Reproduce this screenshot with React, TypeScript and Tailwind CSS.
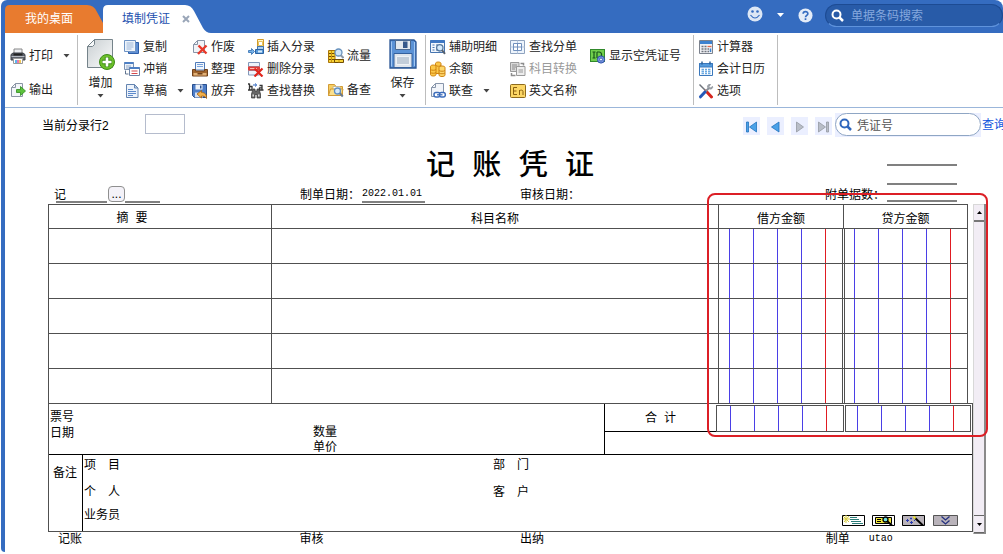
import React from "react";

type Kids = { children: React.ReactNode };

function Ic({ children }: Kids) {
  return (
    <svg className="size-4 shrink-0" viewBox="0 0 16 16" fill="none" aria-hidden="true">
      {children}
    </svg>
  );
}

function Caret() {
  return (
    <svg className="h-[4px] w-[7px] shrink-0" viewBox="0 0 7 4" aria-hidden="true">
      <path d="M.5 0h6L3.500 3.500z" fill="#444" />
    </svg>
  );
}

const PrintIcon = (
  <Ic>
    <path d="M4 1h8v6H4z" fill="#eceef2" stroke="#888" />
    <path d="M1 6.500 3 5h10l2 1.500V12H1z" fill="#5d626c" stroke="#3c4049" />
    <path d="M3.500 5.500h9v2h-9z" fill="#222" />
    <path d="M1.500 8.500h13" stroke="#b4b9c2" />
    <path d="M3.500 10.500h9v5h-9z" fill="#fff" stroke="#999" />
    <path d="M5 12h2v3H5z" fill="#59b7ee" />
    <path d="M7 12h2v3H7z" fill="#e77ab0" />
    <path d="M9 12h2v3H9z" fill="#f1c857" />
  </Ic>
);

const ExportIcon = (
  <Ic>
    <path d="M5.500 1.500h7v13h-11v-9z" fill="#f3f6f9" stroke="#8a95a5" />
    <path d="M1.500 5.500h4v-4" stroke="#8a95a5" />
    <path d="M6.500 7.500h4V4.500L15.500 9l-5 4.500v-3h-4z" fill="#5dc23c" stroke="#2c8a1c" strokeWidth=".8" />
  </Ic>
);

const CopyIcon = (
  <Ic>
    <path d="M4.500 3.500h10v11h-10z" fill="#5f8fd4" stroke="#2d5ea8" />
    <path d="M.5 1.500h11v11H.5z" fill="#eef4fb" stroke="#6e93c4" />
    <path d="M2.500 4h7M2.500 6h7M2.500 8h7M2.500 10h5" stroke="#9db6d8" />
  </Ic>
);

const OffsetIcon = (
  <Ic>
    <path d="M.5 1.500h9v7h-9z" fill="#eef3fa" stroke="#7c93b3" />
    <path d="M.5 2h9" stroke="#4d7fc4" strokeWidth="2" />
    <path d="M2 5h5M2 7h3" stroke="#8fa6c5" />
    <path d="M5.500 6.500h10v8h-10z" fill="#fff" stroke="#6d83a5" />
    <path d="M5.500 7h10" stroke="#4d7fc4" strokeWidth="2" />
    <path d="M7.500 10h6M7.500 12.500h6" stroke="#d5484c" />
    <path d="M1.500 9.500v3.500h3" stroke="#5f738f" />
  </Ic>
);

const DraftIcon = (
  <Ic>
    <path d="M2.500 1.500h8l3.500 3.500v9.500H2.500z" fill="#edf3fb" stroke="#6484b0" />
    <path d="M10.500 1.500V5H14z" fill="#bcd0ea" stroke="#6484b0" />
    <path d="M4 6.500h5M4 8.500h8M4 10.500h8M4 12.500h5" stroke="#5d8acb" />
  </Ic>
);

const VoidIcon = (
  <Ic>
    <path d="M5.500 1.500h7v12h-11v-8z" fill="#f2f4f8" stroke="#8995a8" />
    <path d="M1.500 5.500h4v-4" stroke="#8995a8" />
    <path d="m6.500 6.500 8 8M14.500 6.500l-8.500 8.500" stroke="#e8392a" strokeWidth="2.400" />
  </Ic>
);

const ArrangeIcon = (
  <Ic>
    <path d="M3.500 1.500h9V9h-9z" fill="#f3f7fc" stroke="#4f7ab8" />
    <path d="M5 3.500h6M5 5.500h6" stroke="#77a2dc" />
    <path d="M.5 8.500h3V10h9V8.500h3V15H.5z" fill="#a2662e" stroke="#70411b" />
    <path d="M1.500 12h13v2.500h-13z" fill="#e0b077" />
    <path d="M5.500 12h5v1.500h-5z" fill="#70411b" />
  </Ic>
);

const DiscardIcon = (
  <Ic>
    <path d="M.5 1.500h14v13h-12l-2-2z" fill="#4d7dc7" stroke="#294f8d" />
    <path d="M3.500 1.500h7v5h-7z" fill="#eef3fa" />
    <path d="M8 2.500h1.500v3H8z" fill="#294f8d" />
    <path d="M3 9.500h8v5H3z" fill="#d5dfee" />
    <path d="m5 11 4.500-3.500v2c3.500 0 5.500 2 5 6-1-2-2.500-2.500-5-2.500v2z" fill="#f2b04a" stroke="#9f5d12" strokeWidth=".8" />
  </Ic>
);

const InsertIcon = (
  <Ic>
    <path d="M9.500.5h6v8h-6z" fill="#fff6c9" stroke="#d29a27" />
    <path d="M10.500 2.500h4v4h-4z" fill="#fff" stroke="#e8c25c" />
    <path d="M9.500 7.500h6v3h-6z" fill="#a9cdf0" stroke="#3f73ad" />
    <path d="M7.500 10.500h8v4h-8z" fill="#5597d8" stroke="#2b62a2" />
    <path d="M10 11.500h4v2h-4z" fill="#d7ebfb" />
    <path d="M3.500 9.500 6.500 12.500l-3 3v-2H.5v-2h3z" fill="#77b2e8" stroke="#2e6cb0" strokeWidth=".8" />
  </Ic>
);

const DeleteIcon = (
  <Ic>
    <path d="M.5 1.500h11v4H.5z" fill="#eef3fb" stroke="#8298ba" />
    <path d="M.5 9.500h11v4.500H.5z" fill="#eef3fb" stroke="#8298ba" />
    <path d="M0 5.500h12v4H0z" fill="#e2403b" />
    <path d="M2 7.500h7" stroke="#ffb9b4" />
    <path d="m6.500 7.500 8 8M14.500 7.500l-8 8" stroke="#e0251c" strokeWidth="2.200" />
  </Ic>
);

const ReplaceIcon = (
  <Ic>
    <path d="M1.500.5v7M1.500 3.500h2.500V7H1.500M0 1h1.500M0 7h2" stroke="#333" strokeWidth="1.300" />
    <path d="M11.500 2.500h2.500V7h-2.500V4.800H14M14 7h1.500" stroke="#333" strokeWidth="1.300" />
    <path d="M5 2h3M7 .5 8.800 2 7 3.500" stroke="#2b63bd" />
    <path d="M5 6h2v2h2V6h2l1.500 5v4H9v-3.500H7V15H3.500v-4z" fill="#666" stroke="#333" strokeWidth=".7" />
    <path d="M4.500 11.500h1.500v2H4.500zM10 11.500h1.500v2H10z" fill="#ddd" />
  </Ic>
);

const FlowIcon = (
  <Ic>
    <path d="M.5 2.500H7v12H.5z" fill="#f8d338" stroke="#a87408" />
    <path d="M6.500 11.500h9v3h-9z" fill="#f8d338" stroke="#6f4c06" />
    <path d="M1 5.500h5.500M1 8.500h5.500M1 11.500h14.500" stroke="#6f4c06" />
    <path d="M3.500 3v11M11 12v2.500" stroke="#c9940f" />
    <circle cx="10.500" cy="4.500" r="3.500" fill="#cfe6fa" stroke="#6791bd" strokeWidth="1.300" />
    <path d="m12.800 7.200 2.700 2.800" stroke="#8c98a8" strokeWidth="2" />
  </Ic>
);

const LookupIcon = (
  <Ic>
    <path d="M.5 2.500h6l1.500 2h6.500v9H.5z" fill="#f7cf63" stroke="#d19a35" />
    <path d="M5 4.500h7v5H5z" fill="#fff" stroke="#c9b892" />
    <path d="m.5 13.500 2-6.500h12.500l-1.500 6.500z" fill="#fbe08d" stroke="#d19a35" />
    <circle cx="9.500" cy="9" r="3" fill="#d5eafb" stroke="#5f8fc4" strokeWidth="1.300" />
    <path d="m11.800 11.300 3 3.200" stroke="#6b7b90" strokeWidth="2" />
  </Ic>
);

const DetailIcon = (
  <Ic>
    <path d="M.5 1.500h14v12H.5z" fill="#f1f6fc" stroke="#4674b0" />
    <path d="M.5 2.500h14" stroke="#3e77c3" strokeWidth="3" />
    <path d="M2.500 6h2M2.500 8.500h2M2.500 11h2M6 6h2M6 11h1" stroke="#4674b0" strokeWidth="1.200" />
    <circle cx="9.800" cy="8.800" r="3.200" fill="#d5eafb" stroke="#56789e" strokeWidth="1.300" />
    <path d="m12 11.200 3 3.600" stroke="#56606e" strokeWidth="2" />
  </Ic>
);

const BalanceIcon = (
  <Ic>
    <path d="M5.500 2.500C5.500.5 11 .5 11 2.500v10H5.500z" fill="#fbc84a" stroke="#cf8413" />
    <path d="M.5 5.500c0-2 5.500-2 5.500 0v8c0 2-5.500 2-5.500 0z" fill="#fbc84a" stroke="#cf8413" />
    <path d="M9 6.500c0-2 6-2 6 0v7.500c0 2-6 2-6 0z" fill="#fcd76c" stroke="#cf8413" />
    <path d="M.5 8.500c1 1 4.500 1 5.500 0M.5 11.500c1 1 4.500 1 5.500 0M9 9.500c1 1 5 1 6 0M9 12c1 1 5 1 6 0M6 4.500c1 1 4 1 5 0" stroke="#cf8413" />
  </Ic>
);

const LinkIcon = (
  <Ic>
    <path d="M5.500.5h8v13H1.500V4.500z" fill="#f2f5fa" stroke="#8795aa" />
    <path d="M1.500 4.500h4v-4" stroke="#8795aa" />
    <rect x="4" y="9.500" width="6" height="4.500" rx="2" fill="#fff" stroke="#3c6cba" strokeWidth="1.500" />
    <rect x="9.500" y="9.500" width="5.800" height="4.500" rx="2" fill="#fff" stroke="#3c6cba" strokeWidth="1.500" />
    <path d="M7 11.800h5.500" stroke="#3c6cba" strokeWidth="1.300" />
  </Ic>
);

const SplitIcon = (
  <Ic>
    <path d="M.5 1.500h14v13H.5z" fill="#edf4fc" stroke="#8fa3bf" />
    <path d="M.5 8h14M7.500 1.500v13" stroke="#b5c7df" />
    <path d="M3.500 4.500h8v7h-8z" fill="#fff" stroke="#7190bd" />
    <path d="M3.500 8h8M7.500 4.500v7" stroke="#7190bd" />
  </Ic>
);

const ConvertIcon = (
  <Ic>
    <path d="M.5 1.500h8.500v9H.5z" fill="#d9d9d9" stroke="#9a9a9a" />
    <path d="M2 4h5M2 6h5M2 8h3" stroke="#8d8d8d" />
    <path d="M6.500 5.500h8.500v9H6.500z" fill="#ededed" stroke="#9a9a9a" />
    <path d="M8.500 9h4.500M8.500 11h4.500" stroke="#999" />
    <path d="M10.500 2.500h3v2M1.500 12v2.500h4" stroke="#8d8d8d" strokeWidth="1.500" />
  </Ic>
);

const EnglishIcon = (
  <Ic>
    <rect x=".5" y="1.500" width="15" height="13" rx="1" fill="#fcd665" stroke="#8d6a1d" />
    <path d="M7 4.500H3.500v7H7M3.500 8h3M9.500 12V7M9.500 8c1-1.300 3.500-1.200 3.500.5V12" stroke="#8a6110" />
  </Ic>
);

const IdIcon = (
  <Ic>
    <rect x=".5" y="1.500" width="14" height="12" fill="#72cf4d" stroke="#31892b" />
    <path d="M2.500 4h3M4 4v6M2.500 10h3M7 4v6M7 4h2c3.500 0 3.500 6 0 6H7" stroke="#17551a" strokeWidth="1.200" />
    <circle cx="11" cy="11.500" r="3.600" fill="#7797e3" stroke="#2d4fa8" />
    <circle cx="11" cy="11.500" r="1.500" fill="#e6eefd" stroke="#2d4fa8" strokeWidth=".8" />
  </Ic>
);

const CalculatorIcon = (
  <Ic>
    <path d="M1.500 1.500h13v13h-13z" fill="#f0f1f4" stroke="#7c828d" />
    <path d="M2 2h12v3H2z" fill="#3d82d0" />
    <path d="M3.500 7.500h2M6.500 7.500h2M3.500 10h2M6.500 10h2M3.500 12.500h2M6.500 12.500h2M9.500 10h1.500M9.500 12.500h1.500" stroke="#70757e" strokeWidth="1.300" />
    <path d="M9.500 7.500h4" stroke="#e56a4c" strokeWidth="1.300" />
    <path d="M12.500 9.500V13" stroke="#3d82d0" strokeWidth="1.500" />
  </Ic>
);

const CalendarIcon = (
  <Ic>
    <path d="M1.500 2.500h13v12h-13z" fill="#fff" stroke="#3b78bc" />
    <path d="M1.500 2.500h13v3.500h-13z" fill="#559bdd" stroke="#3b78bc" />
    <path d="M4 .5v3M12 .5v3" stroke="#2e6299" strokeWidth="1.500" />
    <path d="M3.500 8.500h9M3.500 10.500h9M3.500 12.500h9" stroke="#6aa9e2" strokeWidth="1.300" />
    <path d="M6.500 7v6.500M9.500 7v6.500" stroke="#fff" />
  </Ic>
);

const OptionsIcon = (
  <Ic>
    <path d="m1.500 1.500 7 7" stroke="#70747c" strokeWidth="1.500" />
    <path d="m8 8 5.500 6" stroke="#d5261e" strokeWidth="3" strokeLinecap="round" />
    <path d="m11 5-3.500 3.500" stroke="#8a9099" strokeWidth="2" />
    <path d="M7 9 2.500 13.800" stroke="#2358b8" strokeWidth="3" strokeLinecap="round" />
    <path d="M14.500 3.500 12.500 5 11 3.500 12.500 1.500C10 1 9 3 9.800 4.500s3 2 4 1.200 1-1.500.7-2.200z" fill="#aeb3bb" stroke="#777c85" strokeWidth=".7" />
  </Ic>
);

type Cmd = { label: string; icon: React.ReactNode; caret?: boolean; off?: boolean };

function CmdButton({ label, icon, caret, off }: Cmd) {
  return (
    <button disabled={off} className={off ? "flex items-center gap-[3px] text-[#9a9a9a]" : "flex items-center gap-[3px]"}>
      {icon}
      <span className="whitespace-nowrap">{label}</span>
      {caret && (
        <span className="ml-[7px] flex">
          <Caret />
        </span>
      )}
    </button>
  );
}

function Triple({ items, width }: { items: Cmd[]; width: string }) {
  return (
    <div className={"grid shrink-0 auto-rows-[22px] justify-items-start pt-[3px] " + width}>
      {items.map((c) => (
        <CmdButton key={c.label} {...c} />
      ))}
    </div>
  );
}

function Pair({ items, width }: { items: Cmd[]; width: string }) {
  return (
    <div className={"grid shrink-0 auto-rows-[34px] justify-items-start pt-[6px] " + width}>
      {items.map((c) => (
        <CmdButton key={c.label} {...c} />
      ))}
    </div>
  );
}

function Sep() {
  return <div className="mt-[2px] h-[70px] w-px shrink-0 bg-[#bdbdbd]" />;
}

function TabBar() {
  return (
    <header className="flex h-[33px] items-end rounded-tl-md rounded-tr-lg bg-[#356cc0]">
      <button className="relative ml-[4px] h-7 w-[98px] shrink-0 text-white">
        <svg className="absolute inset-0 size-full" viewBox="0 0 98 28" aria-hidden="true">
          <path d="M0 28V5q0-5 5-5h77q7 0 10 7l6 11v10z" fill="#e87b2f" />
        </svg>
        <span className="relative pr-[10px]">我的桌面</span>
      </button>
      <div className="relative flex h-7 w-[108px] shrink-0 items-center pl-[19px]">
        <svg className="absolute inset-0 size-full" viewBox="0 0 108 28" aria-hidden="true">
          <path d="M0 28V5q0-5 5-5h77q6 0 9 6l9 17q3 5 8 5z" fill="#fff" />
        </svg>
        <button className="relative text-[#1b4fae]">填制凭证</button>
        <button aria-label="关闭" className="relative ml-3">
          <svg className="size-2" viewBox="0 0 8 8" aria-hidden="true">
            <path d="m1 1 6 6M7 1 1 7" stroke="#9aa6b8" strokeWidth="2" />
          </svg>
        </button>
      </div>
      <div className="ml-auto flex h-full items-start pt-1">
        <button aria-label="心情" className="mt-[2px]">
          <svg className="size-4" viewBox="0 0 16 16" aria-hidden="true">
            <circle cx="8" cy="8" r="7.500" fill="#dde7f5" />
            <circle cx="5.500" cy="5.500" r="1.300" fill="#356cc0" />
            <circle cx="10.500" cy="5.500" r="1.300" fill="#356cc0" />
            <path d="M3.500 9q4.500 6 9 0" fill="none" stroke="#356cc0" strokeWidth="1.200" />
          </svg>
        </button>
        <svg className="mt-[9px] ml-[14px] h-1 w-[7px]" viewBox="0 0 7 4" aria-hidden="true">
          <path d="M0 0h7L3.500 4z" fill="#fff" />
        </svg>
        <button aria-label="帮助" className="mt-[4px] ml-[14px]">
          <svg className="size-[15px]" viewBox="0 0 16 16" aria-hidden="true">
            <circle cx="8" cy="8" r="7.500" fill="#e4ecf8" />
            <path d="M5.500 6.200C5.500 3 10.600 3 10.500 6c0 1.800-2.500 1.900-2.500 3.800M8 11v1.800" fill="none" stroke="#356cc0" strokeWidth="1.800" />
          </svg>
        </button>
        <label className="ml-3 flex h-[23px] w-[178px] items-center rounded-full border border-[#1d4b93] border-b-[#5f93dc] bg-[#285ba8] pl-[5px]">
          <svg className="size-[13px] shrink-0" viewBox="0 0 13 13" fill="none" stroke="#fff" aria-hidden="true">
            <circle cx="5.500" cy="5.500" r="4" strokeWidth="2" />
            <path d="m8.500 8.500 3.500 3.500" strokeWidth="2.500" />
          </svg>
          <input aria-label="单据条码搜索" placeholder="单据条码搜索" className="ml-[7px] w-full min-w-0 bg-transparent outline-none placeholder:text-[#85a8de]" />
        </label>
      </div>
    </header>
  );
}

function Toolbar() {
  return (
    <div className="flex h-[75px] overflow-hidden border-b border-[#9bb6da] text-[#222]">
      <Pair width="w-[72px] pl-[5px]" items={[{ label: "打印", icon: PrintIcon, caret: true }, { label: "输出", icon: ExportIcon }]} />
      <Sep />
      <button className="flex w-[45px] shrink-0 flex-col items-center pt-[5px]">
        <svg className="h-[34px] w-[29px]" viewBox="0 0 29 34" aria-hidden="true">
          <defs>
            <linearGradient id="paper" x1="0" y1="0" x2="1" y2="1">
              <stop offset="0" stopColor="#c9cfd2" />
              <stop offset="1" stopColor="#fbfcfc" />
            </linearGradient>
          </defs>
          <path d="M8.500 1.500h18v28H1.500v-21z" fill="url(#paper)" stroke="#75838a" />
          <path d="M1.500 8.500h5l2-2v-5z" fill="#f7f9fa" stroke="#75838a" />
          <circle cx="21" cy="24" r="7.500" fill="#6cbf2b" stroke="#3d8c17" />
          <path d="M21 19v10M16 24h10" stroke="#3d8c17" strokeWidth="4.500" />
          <path d="M21 19.500v9M16.500 24h9" stroke="#fff" strokeWidth="2.600" />
        </svg>
        <span className="leading-[22px]">增加</span>
        <Caret />
      </button>
      <Triple width="ml-px w-[68px]" items={[{ label: "复制", icon: CopyIcon }, { label: "冲销", icon: OffsetIcon }, { label: "草稿", icon: DraftIcon, caret: true }]} />
      <Triple width="w-14" items={[{ label: "作废", icon: VoidIcon }, { label: "整理", icon: ArrangeIcon }, { label: "放弃", icon: DiscardIcon }]} />
      <Triple width="w-20" items={[{ label: "插入分录", icon: InsertIcon }, { label: "删除分录", icon: DeleteIcon }, { label: "查找替换", icon: ReplaceIcon }]} />
      <Pair width="w-[52px]" items={[{ label: "流量", icon: FlowIcon }, { label: "备查", icon: LookupIcon }]} />
      <button className="flex w-[45px] shrink-0 flex-col items-center pt-[5px]">
        <svg className="h-[34px] w-7" viewBox="0 0 28 34" aria-hidden="true">
          <path d="M1 2h24l2 2v26H1z" fill="#5b92d6" stroke="#2a5594" strokeWidth="1.300" />
          <path d="M2.500 3.500v25M25.500 4v24" stroke="#9fc6f2" />
          <path d="M6.500 2.500h15v9h-15z" fill="#e2e8ee" stroke="#4b6a93" />
          <path d="M14 3.500h4.500v6.500H14z" fill="#35588a" />
          <path d="M5 15.500h18v14H5z" fill="#dfe5ec" stroke="#34609c" />
          <path d="M7.500 18.500h13v8h-13z" fill="#c2cdd9" stroke="#eef2f6" />
        </svg>
        <span className="leading-[22px]">保存</span>
        <Caret />
      </button>
      <Sep />
      <Triple width="ml-1 w-20" items={[{ label: "辅助明细", icon: DetailIcon }, { label: "余额", icon: BalanceIcon }, { label: "联查", icon: LinkIcon, caret: true }]} />
      <Triple width="w-20" items={[{ label: "查找分单", icon: SplitIcon }, { label: "科目转换", icon: ConvertIcon, off: true }, { label: "英文名称", icon: EnglishIcon }]} />
      <Pair width="w-[103px]" items={[{ label: "显示空凭证号", icon: IdIcon }]} />
      <Sep />
      <Triple width="ml-1 w-[79px]" items={[{ label: "计算器", icon: CalculatorIcon }, { label: "会计日历", icon: CalendarIcon }, { label: "选项", icon: OptionsIcon }]} />
      <Sep />
    </div>
  );
}

function NavButton({ label, children }: Kids & { label: string }) {
  return (
    <button aria-label={label} className="flex h-[18px] w-[17px] items-center justify-center bg-[#ebefff] pt-[2px]">
      <svg className="h-3 w-[13px]" viewBox="0 0 13 12" aria-hidden="true">
        {children}
      </svg>
    </button>
  );
}

function LocateBar() {
  return (
    <div className="flex h-[30px] items-start overflow-hidden pt-[5px]">
      <label htmlFor="line" className="ml-[37px] w-[103px] shrink-0 leading-[26px]">
        当前分录行2
      </label>
      <input id="line" className="mt-px h-5 w-10 border border-[#b5bccd]" />
      <div className="mt-1 ml-auto flex gap-[7px]">
        <NavButton label="首张">
          <path d="M1.500 1H3.500v10h-2zM11.500 1v10L4.500 6z" fill="#4aa1e8" stroke="#2272bd" strokeWidth=".8" />
        </NavButton>
        <NavButton label="上张">
          <path d="M10 1v10L2.500 6z" fill="#4aa1e8" stroke="#2272bd" strokeWidth=".8" />
        </NavButton>
        <NavButton label="下张">
          <path d="M3.500 1v10l7-5z" fill="#b9bec8" stroke="#9499a2" strokeWidth=".8" />
        </NavButton>
        <NavButton label="末张">
          <path d="M1.500 1v10l7-5zM9.500 1h2v10h-2z" fill="#b9bec8" stroke="#9499a2" strokeWidth=".8" />
        </NavButton>
      </div>
      <div className="ml-[3px] flex h-[24px] bg-[#ebefff]">
        <label className="flex h-[23px] w-[146px] items-center rounded-full border border-[#8fa6c4] bg-white pl-[3px]">
          <svg className="size-[13px] shrink-0" viewBox="0 0 13 13" fill="none" stroke="#2f66bd" aria-hidden="true">
            <circle cx="5.500" cy="5.500" r="4" strokeWidth="2" />
            <path d="m8.500 8.500 3.500 3.500" strokeWidth="2.500" />
          </svg>
          <input aria-label="凭证号" placeholder="凭证号" className="mt-[3px] ml-[5px] w-full min-w-0 bg-transparent outline-none placeholder:text-[#555]" />
        </label>
      </div>
      <a href="#query" className="ml-px w-[21px] shrink-0 leading-[24px] whitespace-nowrap text-[#1155dd]">
        查询
      </a>
    </div>
  );
}

function Rules({ first }: { first: string }) {
  return (
    <div className="flex h-full">
      <i className={"h-full border-r border-[#4a3fe6] " + first} />
      <i className="h-full w-6 border-r border-[#4a3fe6]" />
      <i className="h-full w-6 border-r border-[#4a3fe6]" />
      <i className="h-full w-6 border-r border-[#4a3fe6]" />
      <i className="h-full w-6 border-r border-[#e01b22]" />
    </div>
  );
}

function Entries() {
  return (
    <div className="pr-[5px]">
      <table className="w-full table-fixed border-separate border-spacing-0">
        <colgroup>
          <col className="w-[223px]" />
          <col />
          <col className="w-[125px]" />
          <col className="w-[125px]" />
        </colgroup>
        <thead className="leading-4">
          <tr className="h-6">
            <th className="border-t border-l border-[#505050] p-0 pt-[5px] pr-14 font-['Liberation_Mono','Noto_Sans_CJK_SC',monospace] font-normal">摘 要</th>
            <th className="border-t border-l border-[#505050] p-0 pt-[5px] font-normal">科目名称</th>
            <th className="border-t border-l border-[#505050] p-0 pt-[5px] font-normal">借方金额</th>
            <th className="border-t border-r border-l border-[#505050] p-0 pt-[5px] font-normal">贷方金额</th>
          </tr>
        </thead>
        <tbody>
          {[0, 1, 2, 3, 4].map((r) => (
            <tr key={r} className="h-[35px]">
              <td className="border-t border-l border-[#505050] p-0" />
              <td className="border-t border-l border-[#505050] p-0" />
              <td className="border-t border-r border-l border-[#505050] p-0">
                <div className="h-[34px]">
                  <Rules first="w-[11px]" />
                </div>
              </td>
              <td className="border-t border-r border-[#505050] p-0">
                <div className="ml-px h-[34px] border-l border-[#505050]">
                  <Rules first="w-[10px]" />
                </div>
              </td>
            </tr>
          ))}
        </tbody>
      </table>
    </div>
  );
}

function TinyButtons() {
  return (
    <div className="flex items-center gap-[7px]">
      <button aria-label="明细">
        <svg className="h-[11px] w-[23px]" viewBox="0 0 23 11" aria-hidden="true">
          <path d="M.5.500h22v10H.5z" fill="#fff" stroke="#000" />
          <path d="M8 2.500h7M8 4.500h9M9 6.500h10M10 8.500h11" stroke="#2b7c78" />
          <path d="M1 1l6 6M7 1 2 7M4 0v8M1 4h7" stroke="#d8cc3c" />
        </svg>
      </button>
      <button aria-label="查看">
        <svg className="h-[11px] w-[23px]" viewBox="0 0 23 11" aria-hidden="true">
          <path d="M.5.500h22v10H.5z" fill="#fff" stroke="#000" />
          <path d="M3.500 2.500h16v6h-16z" fill="#f3e93c" stroke="#000" />
          <path d="M5 4.500h4M5 6.500h4" stroke="#000" />
          <circle cx="13.500" cy="4.500" r="2.500" fill="#6fe0e0" stroke="#000" strokeWidth="1.300" />
          <path d="m15 6 5 4.500" stroke="#000" strokeWidth="2" />
        </svg>
      </button>
      <button aria-label="向导">
        <svg className="h-[11px] w-[23px]" viewBox="0 0 23 11" aria-hidden="true">
          <path d="M.5.500h22v10H.5z" fill="#b9b3ba" stroke="#000" />
          <path d="m12 2 9 8.500" stroke="#000" strokeWidth="2" />
          <path d="m11.500 1.500 2 2" stroke="#f3e93c" strokeWidth="2" />
          <path d="M4 5.500h3M5.500 4v3M8 3.500h2M9 2.500v2M8 7.500h3M9.500 6v3M12 5.500h1" stroke="#2b3bb0" />
        </svg>
      </button>
      <button aria-label="展开" className="ml-px">
        <svg className="h-[11px] w-[25px]" viewBox="0 0 25 11" aria-hidden="true">
          <path d="M.5.500h24v10H.5z" fill="#b9b3ba" stroke="#555" />
          <path d="m8.500 1.500 4 3.500 4-3.500M8.500 5.500l4 3.500 4-3.500" fill="none" stroke="#23307f" strokeWidth="1.300" />
        </svg>
      </button>
    </div>
  );
}

function Summary() {
  return (
    <div className="border border-[#505050]">
      <div className="flex h-[50px]">
        <div className="grid flex-1 grid-cols-[263px_1fr] content-start pl-px leading-4">
          <div className="pt-[5px]">
            <p>票号</p>
            <p>日期</p>
          </div>
          <div className="pt-[21px] leading-[15px]">
            <p>数量</p>
            <p>单价</p>
          </div>
        </div>
        <div className="flex w-[368px] items-start border-l border-black">
          <div className="flex h-[28px] flex-1 items-center justify-center border-b border-black pt-[3px] font-['Liberation_Mono','Noto_Sans_CJK_SC',monospace]">
            合 计
          </div>
          <div className="mt-px h-[27px] w-[128px] border border-[#505050]">
            <Rules first="w-[14px]" />
          </div>
          <div className="mt-px mr-px ml-px h-[27px] w-[126px] border border-[#505050]">
            <Rules first="w-3" />
          </div>
        </div>
      </div>
      <div className="flex h-[77px] border-t border-black leading-4">
        <div className="w-[34px] border-r border-black pt-[10px] pl-[4px]">备注</div>
        <div className="grid flex-1 grid-cols-[409px_1fr] grid-rows-[27px_23px_1fr] pt-[2px] pl-px">
          <span>项　目</span>
          <span>部　门</span>
          <span>个　人</span>
          <span>客　户</span>
          <span>业务员</span>
          <span className="flex justify-end pt-[3px] pr-[14px]">
            <TinyButtons />
          </span>
        </div>
      </div>
    </div>
  );
}

function ScrollRail() {
  return (
    <div className="-mb-[2px] flex w-[13px] flex-col self-stretch border-r-2 border-b border-l border-[#8a8a8a] border-l-[#d8d8d8] bg-[#f2edf5]">
      <button aria-label="向上滚动" className="flex h-[18px] items-center justify-center border-t border-b-2 border-t-[#d8d8d8] border-b-[#777]">
        <svg className="h-[3px] w-[5px]" viewBox="0 0 5 3" aria-hidden="true">
          <path d="M0 3h5L2.500 0z" />
        </svg>
      </button>
      <div className="flex-1" />
      <button aria-label="向下滚动" className="flex h-[18px] items-center justify-center border-t border-b border-[#666]">
        <svg className="h-[3px] w-[5px]" viewBox="0 0 5 3" aria-hidden="true">
          <path d="M0 0h5L2.500 3z" />
        </svg>
      </button>
    </div>
  );
}

function Voucher() {
  return (
    <section className="pr-[17px] pl-[43px] text-black">
      <div className="grid h-12 grid-cols-[1fr_auto_1fr] pr-[14px]">
        <div />
        <h1 className="pt-1 font-['Liberation_Mono','Noto_Sans_CJK_SC',monospace] text-[29px] leading-[52px] font-medium">记 账 凭 证</h1>
        <div className="flex flex-col items-end pt-[9px] pr-[15px]">
          <input aria-label="编号" className="h-[19px] w-[70px] border-b-2 border-[#808080]" />
          <input aria-label="附注" className="h-[19px] w-[70px] border-b-2 border-[#808080]" />
        </div>
      </div>
      <div className="flex h-[18px] items-start leading-[18px]">
        <div className="flex w-[252px] pl-[6px]">
          <label htmlFor="word">记</label>
          <input id="word" className="-ml-[10px] h-[17px] w-[51px] border-b-2 border-[#808080]" />
          <button className="ml-px flex h-4 w-[17px] items-center justify-center rounded-[4px] border border-[#8f8f8f] bg-[#f4f2f8] leading-none">...</button>
          <input aria-label="字号" className="h-[17px] w-[35px] border-b-2 border-[#808080]" />
        </div>
        <div className="flex w-[220px]">
          <label htmlFor="made" className="w-[62px] whitespace-nowrap">制单日期：</label>
          <input id="made" defaultValue="2022.01.01" className="h-[17px] w-[63px] border-b-2 border-[#808080] pt-px font-['Liberation_Mono',monospace] text-[10px]" />
        </div>
        <span>审核日期：</span>
        <div className="ml-auto flex pr-[29px]">
          <label htmlFor="docs" className="w-[62px] whitespace-nowrap">附单据数：</label>
          <input id="docs" className="h-[16px] w-[70px] border-b-2 border-[#808080]" />
        </div>
      </div>
      <div className="relative flex">
        <div className="min-w-0 flex-1">
          <Entries />
          <Summary />
        </div>
        <ScrollRail />
        <div className="pointer-events-none absolute -top-[11px] -right-[2px] h-[244px] w-[281px] rounded-lg border-2 border-[#dc1f26]" />
      </div>
      <div className="grid grid-cols-[241fr_220fr_305fr_160fr] pl-[10px] leading-[14px]">
        <span>记账</span>
        <span>审核</span>
        <span>出纳</span>
        <span className="flex">
          制单
          <span className="ml-[19px] font-['Liberation_Mono',monospace] text-[10px]">utao</span>
        </span>
      </div>
    </section>
  );
}

export default function App() {
  return (
    <div className="min-h-screen bg-white pb-[2px] pl-px font-['Liberation_Sans','Noto_Sans_CJK_SC',sans-serif] text-[12px]">
      <TabBar />
      <main className="min-h-[519px] overflow-x-hidden rounded-bl-[4px] border-l-4 border-[#356cc0] bg-white">
        <Toolbar />
        <LocateBar />
        <Voucher />
      </main>
    </div>
  );
}
